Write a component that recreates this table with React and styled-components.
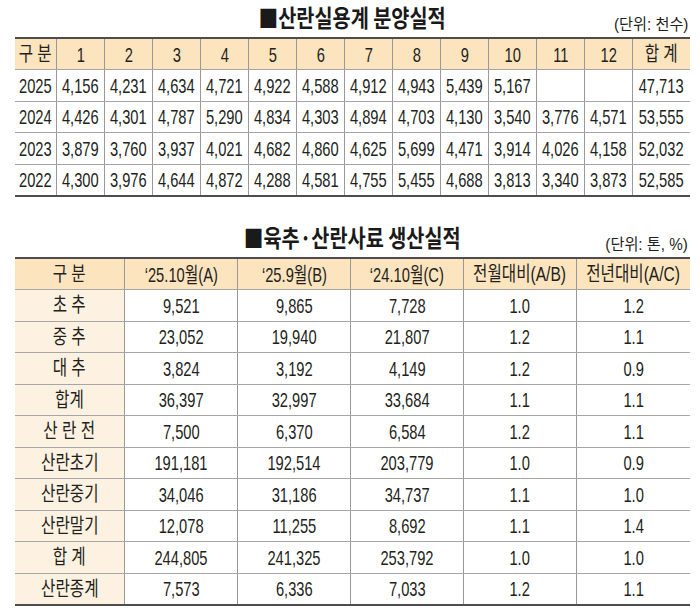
import React from 'react';
import styled, { createGlobalStyle } from 'styled-components';

const GlobalStyle = createGlobalStyle`
  html, body {
    margin: 0;
    padding: 0;
    background: #ffffff;
  }
  body {
    font-family: "Liberation Sans", "Noto Sans CJK KR", sans-serif;
    color: #231f20;
  }
`;

const Page = styled.div`
  width: 675px;
  padding: 0 10px 0 15px;
`;

const Section = styled.section`
  margin-top: ${props => props.$gap || 0}px;
`;

const TitleBar = styled.div`
  display: grid;
  grid-template-columns: 1fr auto 1fr;
  align-items: end;
  height: 37px;
`;

const Title = styled.h2`
  grid-column: 2;
  margin: 0 0 8px;
  font-family: "Noto Sans CJK KR", sans-serif;
  font-weight: 700;
  font-size: 24px;
  line-height: 1;
  white-space: nowrap;
  transform: scaleX(0.82);
  transform-origin: center;
  color: #1a1a1a;
`;

const Unit = styled.span`
  grid-column: 3;
  justify-self: end;
  margin: 0 2px 4px 0;
  font-size: 16px;
  line-height: 1;
  white-space: nowrap;
  transform: scaleX(0.95);
  transform-origin: right center;
`;

const Table = styled.div`
  border-top: 2px solid #4d4d4d;
  border-bottom: 2px solid #4d4d4d;
`;

const Row = styled.div`
  display: grid;
  grid-template-columns: ${props => props.$cols};
  height: ${props => (props.$head ? 31 : 31.5)}px;
  border-bottom: 1px solid #a6a6a6;
  box-sizing: border-box;
  background: ${props => (props.$head ? '#fce4be' : '#ffffff')};

  &:last-child {
    border-bottom: none;
    height: ${props => (props.$head ? 31 : 30.5)}px;
  }
`;

const Cell = styled.div`
  display: flex;
  align-items: center;
  justify-content: center;
  min-width: 0;
  border-right: 1px solid #999999;
  background: ${props => props.$tint || 'transparent'};

  &:last-child {
    border-right: none;
  }
`;

const Txt = styled.span`
  display: inline-block;
  flex-shrink: 0;
  white-space: nowrap;
  font-size: ${props => (props.$ko ? 20 : 21)}px;
  line-height: 1;
  transform: scaleX(${props => (props.$ko ? 0.78 : 0.7)});
  transform-origin: center;
`;

const isKorean = s => /^[\uac00-\ud7a3\s]+$/.test(s) || /^[\uac00-\ud7a3]+\(/.test(s);

const MONTH_COLS = '42px repeat(12, 48px) 57px';
const FEED_COLS = '110px repeat(5, 113px)';

const monthHead = ['구 분', '1', '2', '3', '4', '5', '6', '7', '8', '9', '10', '11', '12', '합 계'];

const monthRows = [
  ['2025', '4,156', '4,231', '4,634', '4,721', '4,922', '4,588', '4,912', '4,943', '5,439', '5,167', '', '', '47,713'],
  ['2024', '4,426', '4,301', '4,787', '5,290', '4,834', '4,303', '4,894', '4,703', '4,130', '3,540', '3,776', '4,571', '53,555'],
  ['2023', '3,879', '3,760', '3,937', '4,021', '4,682', '4,860', '4,625', '5,699', '4,471', '3,914', '4,026', '4,158', '52,032'],
  ['2022', '4,300', '3,976', '4,644', '4,872', '4,288', '4,581', '4,755', '5,455', '4,688', '3,813', '3,340', '3,873', '52,585'],
];

const feedHead = ['구 분', '‘25.10월(A)', '‘25.9월(B)', '‘24.10월(C)', '전월대비(A/B)', '전년대비(A/C)'];

const feedRows = [
  ['초 추', '9,521', '9,865', '7,728', '1.0', '1.2'],
  ['중 추', '23,052', '19,940', '21,807', '1.2', '1.1'],
  ['대 추', '3,824', '3,192', '4,149', '1.2', '0.9'],
  ['합계', '36,397', '32,997', '33,684', '1.1', '1.1'],
  ['산 란 전', '7,500', '6,370', '6,584', '1.2', '1.1'],
  ['산란초기', '191,181', '192,514', '203,779', '1.0', '0.9'],
  ['산란중기', '34,046', '31,186', '34,737', '1.1', '1.0'],
  ['산란말기', '12,078', '11,255', '8,692', '1.1', '1.4'],
  ['합 계', '244,805', '241,325', '253,792', '1.0', '1.0'],
  ['산란종계', '7,573', '6,336', '7,033', '1.2', '1.1'],
];

const DataTable = ({ cols, head, rows, labelTint }) => (
  <Table>
    <Row $cols={cols} $head>
      {head.map((h, i) => (
        <Cell key={i}>
          <Txt $ko={isKorean(h)}>{h}</Txt>
        </Cell>
      ))}
    </Row>
    {rows.map((row, r) => (
      <Row $cols={cols} key={r}>
        {row.map((v, i) => (
          <Cell key={i} $tint={i === 0 ? labelTint : undefined}>
            {v && <Txt $ko={isKorean(v)}>{v}</Txt>}
          </Cell>
        ))}
      </Row>
    ))}
  </Table>
);

const App = () => (
  <Page>
    <GlobalStyle />
    <Section>
      <TitleBar>
        <Title>■산란실용계 분양실적</Title>
        <Unit>(단위: 천수)</Unit>
      </TitleBar>
      <DataTable cols={MONTH_COLS} head={monthHead} rows={monthRows} />
    </Section>

    <Section $gap={23}>
      <TitleBar>
        <Title>■육추·산란사료 생산실적</Title>
        <Unit>(단위: 톤, %)</Unit>
      </TitleBar>
      <DataTable cols={FEED_COLS} head={feedHead} rows={feedRows} labelTint="#fdf2e1" />
    </Section>
  </Page>
);

export default App;
